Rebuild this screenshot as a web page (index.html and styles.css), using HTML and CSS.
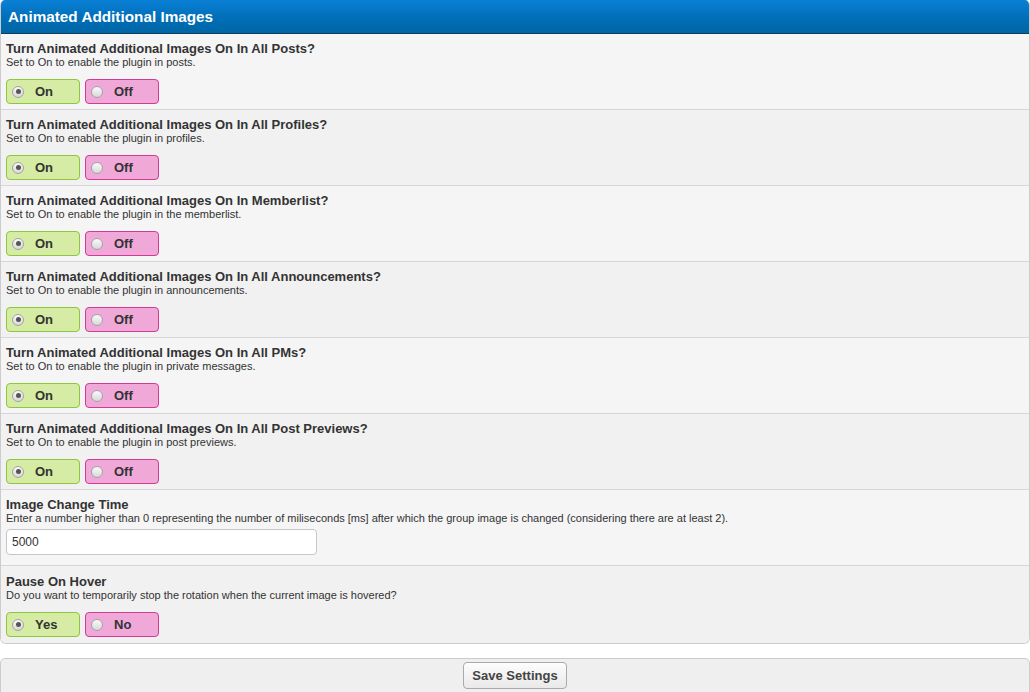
FILE: index.html
```html
<!DOCTYPE html>
<html lang="en">
<head>
    <meta charset="UTF-8">
    <title>Animated Additional Images</title>
    <link rel="stylesheet" href="styles.css">
</head>
<body>
    <div class="form-container">
        <div class="form-head">Animated Additional Images</div>

        <div class="row">
            <div class="row-title">Turn Animated Additional Images On In All Posts?</div>
            <div class="row-desc">Set to On to enable the plugin in posts.</div>
            <div class="choices">
                <label class="choice choice-yes"><span class="radio checked"></span>On</label>
                <label class="choice choice-no"><span class="radio"></span>Off</label>
            </div>
        </div>

        <div class="row alt">
            <div class="row-title">Turn Animated Additional Images On In All Profiles?</div>
            <div class="row-desc">Set to On to enable the plugin in profiles.</div>
            <div class="choices">
                <label class="choice choice-yes"><span class="radio checked"></span>On</label>
                <label class="choice choice-no"><span class="radio"></span>Off</label>
            </div>
        </div>

        <div class="row">
            <div class="row-title">Turn Animated Additional Images On In Memberlist?</div>
            <div class="row-desc">Set to On to enable the plugin in the memberlist.</div>
            <div class="choices">
                <label class="choice choice-yes"><span class="radio checked"></span>On</label>
                <label class="choice choice-no"><span class="radio"></span>Off</label>
            </div>
        </div>

        <div class="row alt">
            <div class="row-title">Turn Animated Additional Images On In All Announcements?</div>
            <div class="row-desc">Set to On to enable the plugin in announcements.</div>
            <div class="choices">
                <label class="choice choice-yes"><span class="radio checked"></span>On</label>
                <label class="choice choice-no"><span class="radio"></span>Off</label>
            </div>
        </div>

        <div class="row">
            <div class="row-title">Turn Animated Additional Images On In All PMs?</div>
            <div class="row-desc">Set to On to enable the plugin in private messages.</div>
            <div class="choices">
                <label class="choice choice-yes"><span class="radio checked"></span>On</label>
                <label class="choice choice-no"><span class="radio"></span>Off</label>
            </div>
        </div>

        <div class="row alt">
            <div class="row-title">Turn Animated Additional Images On In All Post Previews?</div>
            <div class="row-desc">Set to On to enable the plugin in post previews.</div>
            <div class="choices">
                <label class="choice choice-yes"><span class="radio checked"></span>On</label>
                <label class="choice choice-no"><span class="radio"></span>Off</label>
            </div>
        </div>

        <div class="row">
            <div class="row-title">Image Change Time</div>
            <div class="row-desc">Enter a number higher than 0 representing the number of miliseconds [ms] after which the group image is changed (considering there are at least 2).</div>
            <div class="choices input-row">
                <input type="text" class="text-input" value="5000">
            </div>
        </div>

        <div class="row alt last">
            <div class="row-title">Pause On Hover</div>
            <div class="row-desc">Do you want to temporarily stop the rotation when the current image is hovered?</div>
            <div class="choices">
                <label class="choice choice-yes"><span class="radio checked"></span>Yes</label>
                <label class="choice choice-no"><span class="radio"></span>No</label>
            </div>
        </div>
    </div>

    <div class="form-buttons">
        <button class="submit-button">Save Settings</button>
    </div>
</body>
</html>
```

FILE: styles.css
```css
* {
    margin: 0;
    padding: 0;
    box-sizing: border-box;
}
body {
    font-family: "Liberation Sans", Arial, sans-serif;
    font-size: 11px;
    color: #333;
    background: #fff;
}
.form-container {
    width: 1030px;
    border: 1px solid #ccc;
    border-top: 0;
    border-radius: 5px 5px 6px 6px;
    overflow: hidden;
    margin-bottom: 14px;
}
/* Синяя шапка блока */
.form-head {
    height: 34px;
    background: linear-gradient(to bottom, #0a80d6 0%, #006db5 60%, #0066a6 100%);
    border-bottom: 1px solid #0f3d5c;
    color: #fff;
    font-weight: bold;
    font-size: 15.3px;
    padding: 8px 7px 0;
}
.row {
    background: #f5f5f5;
    border-bottom: 1px solid #d6d6d6;
    padding: 8px 5px 0;
    height: 76px;
}
.row.alt {
    background: #f1f1f1;
}
.row.last {
    border-bottom: 0;
    height: 77px;
    padding-top: 9px;
}
.row-title {
    font-weight: bold;
    font-size: 13px;
    line-height: 14px;
}
.row-desc {
    font-size: 11px;
    line-height: 13px;
}
.choices {
    display: flex;
    gap: 5px;
    margin-top: 10px;
}
.input-row {
    margin-top: 4px;
}
/* Кнопки-переключатели */
.choice {
    display: flex;
    align-items: center;
    width: 74px;
    height: 25px;
    border: 1px solid;
    border-radius: 4px;
    font-weight: bold;
    font-size: 13px;
    color: #333;
    padding-left: 5px;
    gap: 11px;
}
.choice-yes {
    background: #d6eba3;
    border-color: #8dc63f;
}
.choice-no {
    background: #efa8d8;
    border-color: #d03c93;
}
.radio {
    width: 12px;
    height: 12px;
    border-radius: 50%;
    border: 1px solid #a3a3a3;
    background: linear-gradient(to bottom, #fafafa, #d8d8d8);
    position: relative;
}
.radio.checked::after {
    content: "";
    position: absolute;
    left: 2.5px;
    top: 2.5px;
    width: 5px;
    height: 5px;
    border-radius: 50%;
    background: #555;
}
.text-input {
    width: 311px;
    height: 26px;
    border: 1px solid #c6c6c6;
    border-radius: 4px;
    background: #fff;
    font-family: "Liberation Sans", Arial, sans-serif;
    font-size: 12px;
    color: #333;
    padding: 0 5px;
}
.form-buttons {
    width: 1030px;
    height: 40px;
    border: 1px solid #ccc;
    border-radius: 5px;
    background: #efefef;
    display: flex;
    justify-content: center;
    padding-top: 3px;
}
.submit-button {
    height: 27px;
    padding: 0 8px;
    border: 1px solid #aaa;
    border-radius: 4px;
    background: linear-gradient(to bottom, #fdfdfd, #e9e9e9);
    font-family: "Liberation Sans", Arial, sans-serif;
    font-weight: bold;
    font-size: 13px;
    color: #444;
}
```
